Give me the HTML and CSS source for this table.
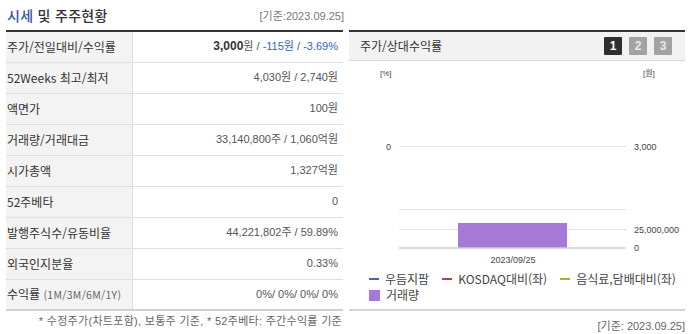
FILE: index.html
```html
<!DOCTYPE html>
<html lang="ko">
<head>
<meta charset="utf-8">
<link rel="stylesheet" href="styles.css">
</head>
<body>
<div class="page">
  <section class="left">
    <div class="title-row">
      <h2 class="title"><span class="accent">시세</span> 및 주주현황</h2>
      <span class="date">[기준:2023.09.25]</span>
    </div>
    <table class="info">
      <tr><th>주가/전일대비/수익률</th><td><b class="strong">3,000</b>원 / <span class="down">-115원</span> / <span class="down">-3.69%</span></td></tr>
      <tr><th>52Weeks 최고/최저</th><td>4,030원 / 2,740원</td></tr>
      <tr><th>액면가</th><td>100원</td></tr>
      <tr><th>거래량/거래대금</th><td>33,140,800주 / 1,060억원</td></tr>
      <tr><th>시가총액</th><td>1,327억원</td></tr>
      <tr><th>52주베타</th><td>0</td></tr>
      <tr><th>발행주식수/유동비율</th><td>44,221,802주 / 59.89%</td></tr>
      <tr><th>외국인지분율</th><td>0.33%</td></tr>
      <tr class="last"><th>수익률 <span class="small">(1M/3M/6M/1Y)</span></th><td>0%/ 0%/ 0%/ 0%</td></tr>
    </table>
    <p class="note">* 수정주가(차트포함), 보통주 기준, * 52주베타: 주간수익률 기준</p>
  </section>
  <section class="right">
    <div class="chart-head">
      <span class="chart-title">주가/상대수익률</span>
      <div class="tabs">
        <span class="tab on">1</span>
        <span class="tab">2</span>
        <span class="tab">3</span>
      </div>
    </div>
    <svg class="chart" width="336" height="206" viewBox="0 0 336 206">
      <text x="31" y="15" class="ax-small">[%]</text>
      <text x="294" y="15" class="ax-small">[원]</text>
      <line x1="50" y1="85.5" x2="277" y2="85.5" stroke="#e3e3e3" stroke-width="1"/>
      <line x1="50" y1="148.5" x2="277" y2="148.5" stroke="#e3e3e3" stroke-width="1"/>
      <line x1="50" y1="168.5" x2="277" y2="168.5" stroke="#e3e3e3" stroke-width="1"/>
      <rect x="109" y="162" width="109" height="25" fill="#a678d8"/>
      <line x1="50" y1="187" x2="277" y2="187" stroke="#cfcfcf" stroke-width="1.5"/>
      <text x="42" y="89" text-anchor="end" class="ax">0</text>
      <text x="285" y="89" class="ax">3,000</text>
      <text x="285" y="172" class="ax">25,000,000</text>
      <text x="285" y="190" class="ax">0</text>
      <text x="164" y="202" text-anchor="middle" class="ax">2023/09/25</text>
    </svg>
    <div class="legend">
      <div class="legend-row">
        <span class="item"><i class="dash blue"></i>우듬지팜</span>
        <span class="item"><i class="dash red"></i>KOSDAQ대비(좌)</span>
        <span class="item"><i class="dash green"></i>음식료,담배대비(좌)</span>
      </div>
      <div class="legend-row">
        <span class="item"><i class="sq"></i>거래량</span>
      </div>
    </div>
    <p class="chart-date">[기준: 2023.09.25]</p>
  </section>
</div>
</body>
</html>
```
FILE: styles.css
```css
* { box-sizing: border-box; }
html, body { margin: 0; padding: 0; background: #fff; }
body {
  font-family: "Liberation Sans", "Noto Sans CJK KR", sans-serif;
  color: #333;
  width: 692px;
  height: 334px;
  overflow: hidden;
}
.page {
  display: flex;
  gap: 6px;
  padding: 0 7px 0 6px;
}
.left { width: 337px; }
.right { width: 336px; }

.title-row {
  height: 30px;
  display: flex;
  justify-content: space-between;
  align-items: center;
}
.title {
  margin: 0 0 0 1px;
  font-family: "Noto Sans CJK KR", sans-serif;
  font-size: 14px;
  font-weight: 500;
  line-height: 16px;
  letter-spacing: 0.3px;
  color: #333;
}
.accent { color: #3350a8; }
.date {
  font-size: 11px;
  color: #777;
  margin-right: -1px;
}

.info {
  width: 100%;
  border-collapse: collapse;
  border-top: 2px solid #333;
}
.info tr { height: 31px; border-bottom: 1px solid #e0e0e0; }
.info tr.last { border-bottom: 2px solid #cfcfcf; }
.info th {
  width: 126px;
  background: #f3f3f3;
  border-right: 1px solid #dcdcdc;
  text-align: left;
  font-family: "Noto Sans CJK KR", sans-serif;
  font-weight: 400;
  font-size: 12px;
  line-height: 14px;
  color: #333;
  padding: 0 0 0 1px;
  white-space: nowrap;
}
.info th .small { font-size: 10.5px; color: #666; letter-spacing: 0.3px; }
.info td {
  text-align: right;
  font-size: 11px;
  line-height: 13px;
  color: #555;
  padding: 0 5px 0 0;
  white-space: nowrap;
}
.info td .strong { color: #333; font-size: 12px; }
.info td .down { color: #2d64c4; }

.note {
  margin: 3px 0 0;
  text-align: right;
  font-size: 11px;
  line-height: 14px;
  letter-spacing: 0.3px;
  color: #666;
  padding-right: 1px;
}

.chart-head {
  margin-top: 30px;
  border-top: 2px solid #333;
  background: #f2f2f2;
  border-bottom: 1px solid #dadada;
  height: 31px;
  display: flex;
  align-items: center;
  justify-content: space-between;
  padding: 0 13px 0 11px;
}
.chart-title {
  font-family: "Noto Sans CJK KR", sans-serif;
  font-size: 12px;
  line-height: 14px;
  color: #333;
}
.tabs { display: flex; gap: 7px; }
.tab {
  width: 18px;
  height: 18px;
  background: #a3a3a3;
  color: #e9e9e9;
  font-size: 12px;
  font-weight: 700;
  line-height: 18px;
  text-align: center;
  border-radius: 1px;
}
.tab.on { background: #2f2f2f; color: #fff; }

.chart { display: block; }
.ax { font-family: "Liberation Sans", sans-serif; font-size: 9px; fill: #444; }
.ax-small { font-family: "Liberation Sans", "Noto Sans CJK KR", sans-serif; font-size: 8px; fill: #444; }

.legend { padding-left: 20px; margin-top: 4px; }
.legend-row {
  display: flex;
  gap: 13px;
  height: 16px;
  align-items: center;
}
.item {
  display: flex;
  align-items: center;
  font-family: "Noto Sans CJK KR", sans-serif;
  font-size: 12px;
  line-height: 14px;
  color: #444;
}
.dash { display: inline-block; width: 10px; height: 2px; margin-right: 6px; }
.dash.blue { background: #3a6bb8; }
.dash.red { background: #b8452f; }
.dash.green { background: #9cb82d; }
.sq { display: inline-block; width: 11px; height: 11px; background: #a678d8; margin-right: 6px; }

.chart-date {
  margin: 6px 0 0;
  border-top: 2px solid #d4d4d4;
  padding-top: 8px;
  text-align: right;
  font-size: 11px;
  line-height: 14px;
  color: #666;
}
```
